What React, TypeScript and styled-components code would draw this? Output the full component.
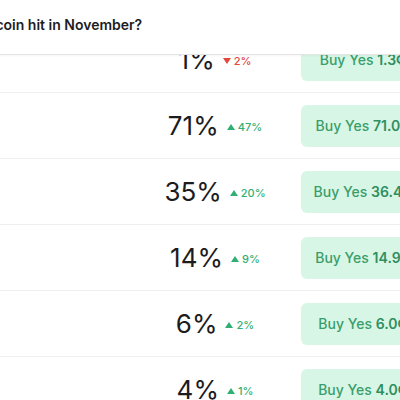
import { styled, createGlobalStyle } from "styled-components"

const GlobalStyle = createGlobalStyle`
  html, body {
    margin: 0;
    padding: 0;
    background: #ffffff;
    font-family: Inter, "Noto Sans", "Liberation Sans", sans-serif;
    overflow: hidden;
  }
`

interface Outcome {
  chance: number
  change: number
  price: string
}

const outcomes: Outcome[] = [
  { chance: 1, change: -2, price: "1.3¢" },
  { chance: 71, change: 47, price: "71.0¢" },
  { chance: 35, change: 20, price: "36.4¢" },
  { chance: 14, change: 9, price: "14.9¢" },
  { chance: 6, change: 2, price: "6.0¢" },
  { chance: 4, change: 1, price: "4.0¢" }
]

function App() {
  return (
    <>
      <GlobalStyle />
      <Page>
        <Header>
          <Title>What price will Bitcoin hit in November?</Title>
        </Header>
        <ListViewport>
          <List>
            {outcomes.map((o, i) => (
              <Row key={i}>
                <Spacer />
                <ChanceCell>
                  <Chance>{o.chance}%</Chance>
                  <Change $down={o.change < 0}>
                    <Arrow $down={o.change < 0} />
                    {Math.abs(o.change)}%
                  </Change>
                </ChanceCell>
                <BuyButton>
                  Buy Yes <Price>{o.price}</Price>
                </BuyButton>
              </Row>
            ))}
          </List>
        </ListViewport>
      </Page>
    </>
  )
}

export default App

const Page = styled.div`
  width: 400px;
  height: 400px;
  overflow: hidden;
  display: flex;
  flex-direction: column;
`

const Header = styled.div`
  height: 54px;
  flex-shrink: 0;
  border-bottom: 1px solid #e4e4e4;
  box-shadow: 0 1px 2px rgba(0, 0, 0, 0.04);
  display: flex;
  align-items: flex-start;
  overflow: hidden;
  position: relative;
  z-index: 1;
  background: #fff;
`

const Title = styled.h1`
  margin: 15px 0 0 -126px;
  font-size: 14px;
  font-weight: 600;
  color: #1d1d1f;
  white-space: nowrap;
  line-height: 20px;
`

const ListViewport = styled.div`
  flex: 1;
  overflow: hidden;
`

const List = styled.div`
  margin-top: -28px;
  display: flex;
  flex-direction: column;
`

const Row = styled.div`
  height: 65px;
  border-bottom: 1px solid #efefef;
  display: flex;
  align-items: center;
  flex-shrink: 0;
`

const Spacer = styled.div`
  width: 150px;
  flex-shrink: 0;
`

const ChanceCell = styled.div`
  width: 130px;
  flex-shrink: 0;
  display: flex;
  align-items: center;
  justify-content: center;
  gap: 8px;
`

const Chance = styled.span`
  font-size: 26px;
  font-weight: 400;
  color: #1c1c1e;
`

const Change = styled.span<{ $down: boolean }>`
  display: flex;
  align-items: center;
  gap: 3px;
  font-size: 11px;
  font-weight: 500;
  color: ${(p) => (p.$down ? "#e2483d" : "#2fb072")};
  padding-top: 2px;
`

const Arrow = styled.span<{ $down: boolean }>`
  width: 0;
  height: 0;
  border-left: 4px solid transparent;
  border-right: 4px solid transparent;
  ${(p) =>
    p.$down
      ? "border-top: 6px solid #e2483d;"
      : "border-bottom: 6px solid #2fb072;"}
`

const BuyButton = styled.div`
  margin-left: 21px;
  width: 122px;
  height: 42px;
  flex-shrink: 0;
  border-radius: 6px;
  background: #d8f6e5;
  color: #3a9e6c;
  font-size: 14px;
  font-weight: 500;
  display: flex;
  align-items: center;
  justify-content: center;
  white-space: pre;
`

const Price = styled.span`
  font-weight: 600;
  color: #2f8f60;
`
